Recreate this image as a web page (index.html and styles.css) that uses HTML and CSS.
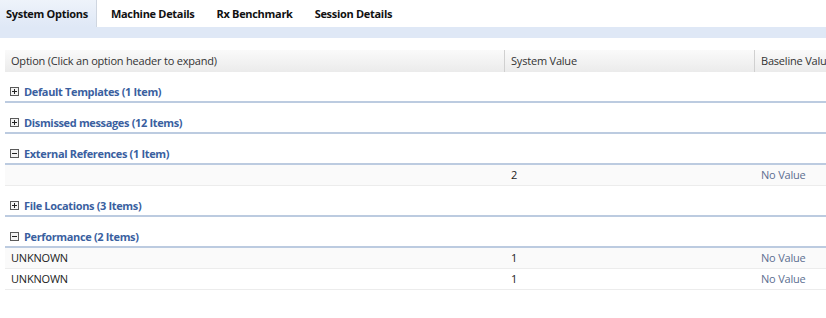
FILE: index.html
```html
<!DOCTYPE html>
<html>
<head>
<meta charset="utf-8">
<link rel="stylesheet" href="styles.css">
</head>
<body>
<div class="tabs">
  <div class="tab active">System Options</div>
  <div class="tab">Machine Details</div>
  <div class="tab">Rx Benchmark</div>
  <div class="tab">Session Details</div>
</div>
<div class="strip"></div>
<div class="grid">
  <div class="hdr">
    <div class="hcell">Option (Click an option header to expand)</div>
    <div class="hcell sep">System Value</div>
    <div class="hcell sep">Baseline Value</div>
  </div>

  <div class="group"><svg class="ico" width="9" height="9" viewBox="0 0 9 9"><rect x="0.5" y="0.5" width="8" height="8" fill="#f4f4f4" stroke="#5a5a5a"/><path d="M2 4.5h5M4.5 2v5" stroke="#222" stroke-width="1"/></svg><span>Default Templates (1 Item)</span></div>
  <div class="group"><svg class="ico" width="9" height="9" viewBox="0 0 9 9"><rect x="0.5" y="0.5" width="8" height="8" fill="#f4f4f4" stroke="#5a5a5a"/><path d="M2 4.5h5M4.5 2v5" stroke="#222" stroke-width="1"/></svg><span>Dismissed messages (12 Items)</span></div>
  <div class="group"><svg class="ico" width="9" height="9" viewBox="0 0 9 9"><rect x="0.5" y="0.5" width="8" height="8" fill="#f4f4f4" stroke="#5a5a5a"/><path d="M2 4.5h5" stroke="#222" stroke-width="1"/></svg><span>External References (1 Item)</span></div>
  <div class="row alt">
    <div class="cell"></div>
    <div class="cell">2</div>
    <div class="cell muted">No Value</div>
  </div>
  <div class="group"><svg class="ico" width="9" height="9" viewBox="0 0 9 9"><rect x="0.5" y="0.5" width="8" height="8" fill="#f4f4f4" stroke="#5a5a5a"/><path d="M2 4.5h5M4.5 2v5" stroke="#222" stroke-width="1"/></svg><span>File Locations (3 Items)</span></div>
  <div class="group"><svg class="ico" width="9" height="9" viewBox="0 0 9 9"><rect x="0.5" y="0.5" width="8" height="8" fill="#f4f4f4" stroke="#5a5a5a"/><path d="M2 4.5h5" stroke="#222" stroke-width="1"/></svg><span>Performance (2 Items)</span></div>
  <div class="row alt">
    <div class="cell">UNKNOWN</div>
    <div class="cell">1</div>
    <div class="cell muted">No Value</div>
  </div>
  <div class="row">
    <div class="cell">UNKNOWN</div>
    <div class="cell">1</div>
    <div class="cell muted">No Value</div>
  </div>
</div>
</body>
</html>
```
FILE: styles.css
```css
body {
  margin: 0;
  font-family: "Open Sans", "Noto Sans", sans-serif;
  font-size: 11px;
  letter-spacing: -0.2px;
  color: #222;
  background: #fff;
  overflow: hidden;
}
.tabs {
  display: flex;
  height: 27px;
}
.tab {
  font-weight: bold;
  font-size: 11px;
  letter-spacing: -0.3px;
  color: #111;
  padding: 0 11px;
  line-height: 27px;
}
.tab.active {
  padding: 0 8px 0 6px;
  background: linear-gradient(#eef3fa, #dfe8f6);
  border-right: 1px solid #cfd6e0;
  margin-right: 3px;
}
.strip {
  height: 11px;
  background: #dfe8f6;
}
.grid {
  margin: 12px 0 0 5px;
}
.hdr {
  display: grid;
  grid-template-columns: 499px 250px 1fr;
  height: 22px;
  background: linear-gradient(#fafafa, #ebebeb);
}
.hcell {
  padding-left: 6px;
  line-height: 22px;
  color: #333;
  white-space: nowrap;
  overflow: hidden;
}
.hcell.sep {
  border-left: 1px solid #d0d0d0;
}
.group {
  display: flex;
  align-items: center;
  gap: 5px;
  height: 14px;
  padding: 12px 0 3px 5px;
  border-bottom: 2px solid #bccbe0;
  color: #3a5f9f;
  font-weight: bold;
  letter-spacing: -0.35px;
}
.ico {
  flex: none;
}
.row {
  display: grid;
  grid-template-columns: 499px 250px 1fr;
  height: 20px;
  border-bottom: 1px solid #ececec;
}
.row.alt {
  background: #fafafa;
}
.cell {
  padding-left: 6px;
  line-height: 20px;
}
.cell + .cell {
  padding-left: 7px;
}
.muted {
  color: #5d6f91;
}
```
